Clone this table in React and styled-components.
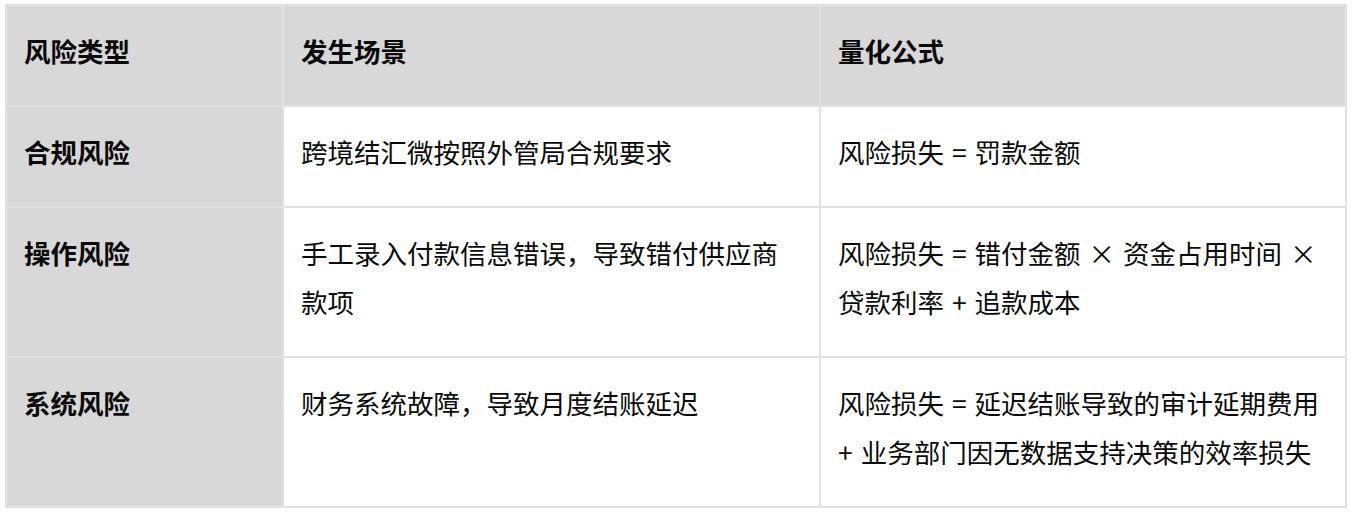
import React from 'react'
import styled, { createGlobalStyle } from 'styled-components'

const GlobalStyle = createGlobalStyle`
  body {
    margin: 0;
    background: #ffffff;
    font-family: "Noto Sans CJK SC", "Noto Sans", sans-serif;
    color: #0a0a0a;
  }
`

const rows = [
  {
    type: '合规风险',
    scene: '跨境结汇微按照外管局合规要求',
    formula: '风险损失 = 罚款金额',
  },
  {
    type: '操作风险',
    scene: '手工录入付款信息错误，导致错付供应商款项',
    formula: '风险损失 = 错付金额 × 资金占用时间 × 贷款利率 + 追款成本',
  },
  {
    type: '系统风险',
    scene: '财务系统故障，导致月度结账延迟',
    formula: '风险损失 = 延迟结账导致的审计延期费用 + 业务部门因无数据支持决策的效率损失',
  },
]

const RiskTable = () => {
  return (
    <Page>
      <GlobalStyle />
      <Table>
        <colgroup>
          <col style={{ width: 277 }} />
          <col style={{ width: 537 }} />
          <col />
        </colgroup>
        <thead>
          <tr>
            <HeadCell>风险类型</HeadCell>
            <HeadCell>发生场景</HeadCell>
            <HeadCell>量化公式</HeadCell>
          </tr>
        </thead>
        <tbody>
          {rows.map((row) => (
            <tr key={row.type}>
              <Cell $label>{row.type}</Cell>
              <Cell>{row.scene}</Cell>
              <Cell>{row.formula}</Cell>
            </tr>
          ))}
        </tbody>
      </Table>
    </Page>
  )
}

const Page = styled.div`
  padding: 4px 5px 0 5px;
`

const Table = styled.table`
  width: 1342px;
  table-layout: fixed;
  border-collapse: collapse;
  font-size: 26.5px;
  line-height: 49px;
  word-spacing: 2px;
`

const HeadCell = styled.th`
  background: #d8d8d8;
  border: 2px solid #e0e0e5;
  padding: 20px 24px 30px 17px;
  text-align: left;
  vertical-align: top;
  font-weight: 700;
`

const Cell = styled.td`
  background: ${(p) => (p.$label ? '#d8d8d8' : '#ffffff')};
  border: 2px solid #e0e0e5;
  padding: 20px 24px 30px 17px;
  vertical-align: top;
  font-weight: ${(p) => (p.$label ? 700 : 400)};
`

export default RiskTable
